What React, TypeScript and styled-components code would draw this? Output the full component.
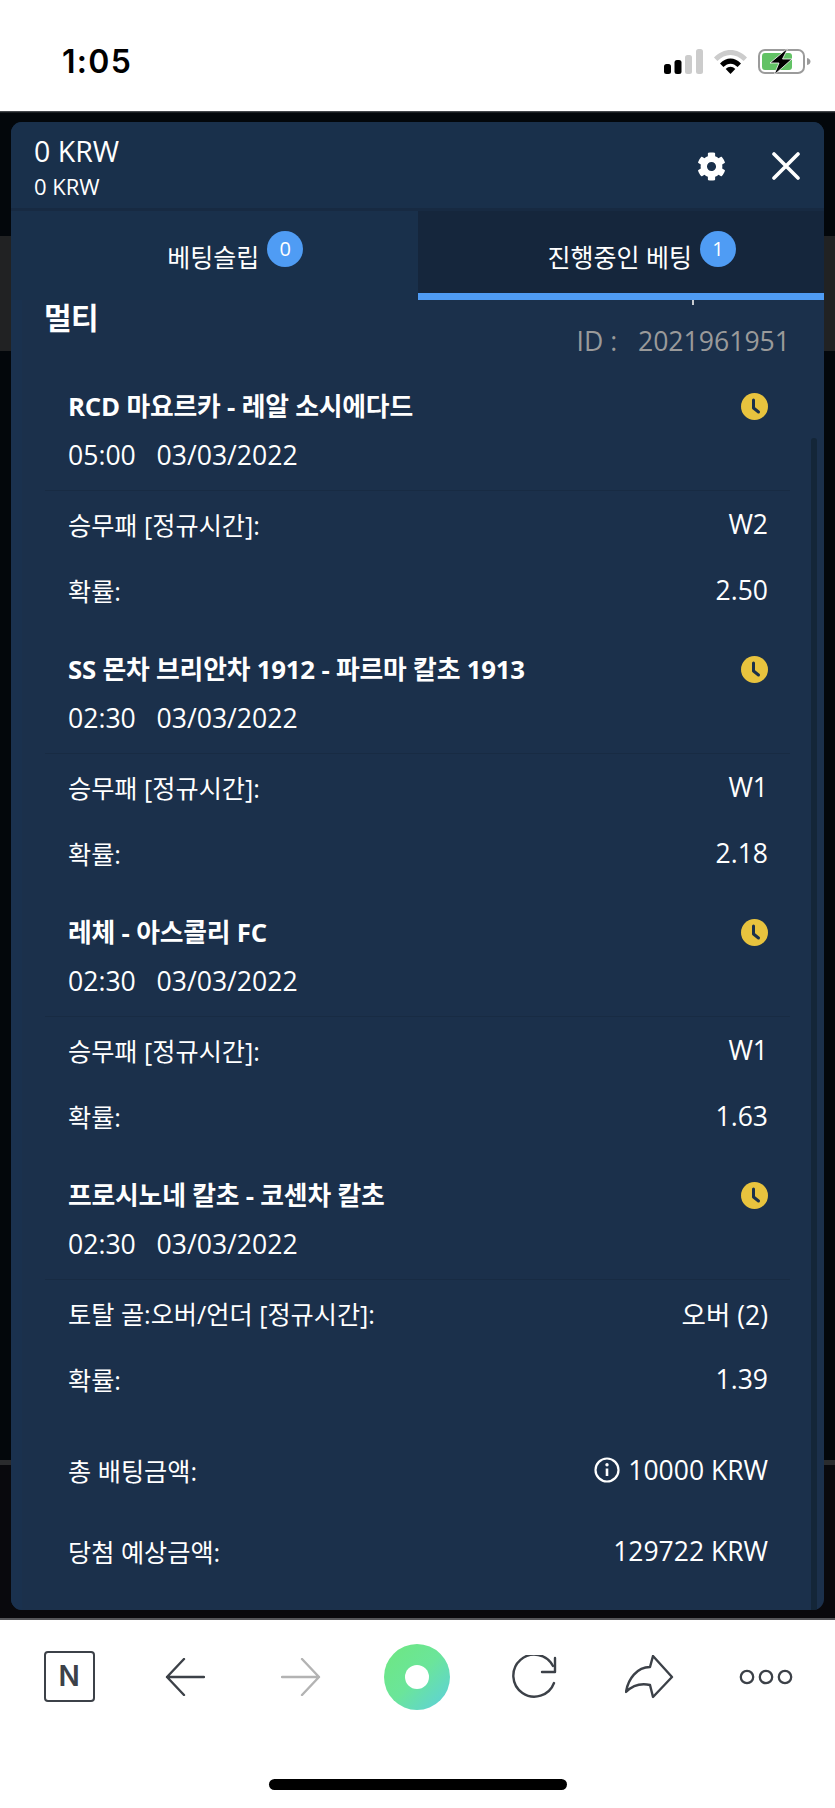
import React from "react";
import styled, { createGlobalStyle } from "styled-components";
import { FaCog } from "react-icons/fa";

const Global = createGlobalStyle`
  html, body { margin: 0; padding: 0; background: #fff; }
  * { box-sizing: border-box; }
  body { font-family: "Open Sans", "Noto Sans CJK KR", sans-serif; }
`;

const Page = styled.div`
  width: 835px;
  height: 1808px;
  display: flex;
  flex-direction: column;
  overflow: hidden;
`;

const StatusBar = styled.div`
  height: 111px;
  flex: none;
  background: #fff;
  display: flex;
  justify-content: space-between;
  padding: 45px 24px 0 62px;
`;

const Clock = styled.div`
  font-family: Inter, sans-serif;
  font-weight: 600;
  font-size: 32px;
  line-height: 34px;
  color: #000;
  letter-spacing: 1.300px;
`;

const StatusIcons = styled.div`
  display: flex;
  align-items: center;
  height: 32px;
  gap: 10px;
`;

const Stage = styled.div`
  height: 1509px;
  flex: none;
  padding: 11px 11px 10px;
  background: linear-gradient(
    to bottom,
    #5a5c60 0,
    #03070b 2px,
    #03070b 125px,
    #212223 125px,
    #212223 240px,
    #03070b 240px,
    #03070b 1349px,
    #2a2b2d 1349px,
    #2a2b2d 1354px,
    #09090d 1354px,
    #09090d 1507px,
    #55565a 1507px
  );
`;

const Panel = styled.div`
  height: 1488px;
  border-radius: 11px;
  overflow: hidden;
  display: flex;
  flex-direction: column;
  background: #1b304b;
  color: #fff;
`;

const Header = styled.div`
  height: 89px;
  flex: none;
  background: #19304b;
  border-bottom: 3px solid #172a42;
  padding: 8px 16px 0 23px;
  display: flex;
  justify-content: space-between;
`;

const Amounts = styled.div`
  display: flex;
  flex-direction: column;
`;

const Balance = styled.div`
  font-size: 28.500px;
  line-height: 42px;
`;

const SubBalance = styled.div`
  font-size: 22px;
  line-height: 28px;
`;

const HeaderActions = styled.div`
  display: flex;
  align-items: flex-start;
  gap: 46px;
  padding: 22px 8px 0 0;
  svg { display: block; }
`;

const Tabs = styled.div`
  display: flex;
  height: 89px;
  flex: none;
`;

const Tab = styled.div<{ $active?: boolean }>`
  flex: 1 1 0;
  display: flex;
  justify-content: center;
  align-items: flex-start;
  gap: 8px;
  padding: 20px 0 0 42px;
  background: ${(p) => (p.$active ? "#15263c" : "#19304b")};
  border-bottom: 7px solid ${(p) => (p.$active ? "#4f9cf4" : "#19304b")};
`;

const TabLabel = styled.span`
  font-size: 25px;
  line-height: 52px;
`;

const Badge = styled.span`
  width: 36px;
  height: 36px;
  border-radius: 50%;
  background: #4f9cf4;
  font-size: 20px;
  line-height: 36px;
  text-align: center;
`;

const Body = styled.div`
  position: relative;
  flex: 1;
  border-left: 11px solid #1a314e;
  padding: 0 34px 0 23px;
  display: flex;
  flex-direction: column;
`;

const Track = styled.div`
  position: absolute;
  right: 7px;
  top: 138px;
  bottom: 0;
  width: 6px;
  border-radius: 3px 3px 0 0;
  background: #142638;
`;

const Tick = styled.div`
  position: absolute;
  left: 670px;
  top: 0;
  width: 2px;
  height: 5px;
  background: #c9ccd0;
`;

const TopRow = styled.div`
  height: 86px;
  flex: none;
  display: flex;
  justify-content: space-between;
  align-items: flex-start;
`;

const Kind = styled.div`
  font-size: 30px;
  font-weight: 700;
  line-height: 36px;
  letter-spacing: -0.5px;
  margin-left: -1px;
`;

const BetId = styled.div`
  margin-top: 21px;
  font-size: 26.600px;
  line-height: 40px;
  color: #9a9a9a;
  white-space: pre;
`;

const Match = styled.div`
  height: 263px;
  flex: none;
  display: flex;
  flex-direction: column;
`;

const MatchTitleRow = styled.div`
  height: 40px;
  margin-bottom: 9px;
  padding: 0 22px 0 23px;
  display: flex;
  justify-content: space-between;
  align-items: center;
`;

const MatchTitle = styled.div`
  font-size: 25.800px;
  font-weight: 700;
  line-height: 40px;
  letter-spacing: -0.2px;
`;

const MatchDate = styled.div`
  height: 56px;
  padding-left: 23px;
  font-size: 26.600px;
  line-height: 40px;
  white-space: pre;
  border-bottom: 1px solid #182b43;
  flex: none;
`;

const Row = styled.div<{ $h?: number }>`
  height: ${(p) => p.$h ?? 66}px;
  padding: 0 22px 0 23px;
  flex: none;
  display: flex;
  justify-content: space-between;
  align-items: center;
  font-size: 26.500px;
`;

const RowLabel = styled.span`
  font-size: 25.200px;
`;

const RowValue = styled.span`
  display: flex;
  align-items: center;
  gap: 8px;
`;

const Totals = styled.div`
  display: flex;
  flex-direction: column;
  margin-top: -9px;
`;

const BottomNav = styled.div`
  height: 188px;
  flex: none;
  background: #fff;
  padding: 23px 11px 0;
  display: flex;
  flex-direction: column;
  align-items: stretch;
`;

const NavIcons = styled.div`
  height: 67px;
  display: grid;
  grid-template-columns: repeat(7, 1fr);
  align-items: center;
  justify-items: center;
`;

const NBox = styled.div`
  width: 51px;
  height: 51px;
  border: 2.500px solid #3c4148;
  border-radius: 4px;
  color: #3c4148;
  font-family: Inter, sans-serif;
  font-weight: 600;
  font-size: 28px;
  line-height: 46px;
  text-align: center;
`;

const HomeDisc = styled.div`
  width: 66px;
  height: 66px;
  border-radius: 50%;
  background: linear-gradient(135deg, #6ee780 0%, #6be59a 50%, #5ccfe0 100%);
  display: flex;
  align-items: center;
  justify-content: center;
`;

const HomeHole = styled.div`
  width: 24px;
  height: 24px;
  border-radius: 50%;
  background: #fff;
`;

const HomeIndicator = styled.div`
  width: 298px;
  height: 11px;
  border-radius: 6px;
  background: #000;
  margin: 69px auto 0;
`;

const Signal = () => (
  <svg width="39" height="25" viewBox="0 0 39 25">
    <rect x="0" y="15" width="7" height="10" rx="2.500" fill="#000" />
    <rect x="10.500" y="11" width="7" height="14" rx="2.500" fill="#000" />
    <rect x="21" y="6" width="7" height="19" rx="2.500" fill="#ccc" />
    <rect x="32" y="0" width="7" height="25" rx="2.500" fill="#ccc" />
  </svg>
);

const Wifi = () => (
  <svg width="35" height="25" viewBox="0 0 35 25">
    <path d="M1 8.500C10.500-1.500 24.500-1.500 34 8.500l-3.400 3.600C22.800 4 12.200 4 4.400 12.100z" fill="#ccc" />
    <path d="M7 14.600C13.500 7.800 21.500 7.800 28 14.600l-3.400 3.500C20 13.500 15 13.500 10.400 18.100z" fill="#000" />
    <path d="M12.700 20c3-3 6.600-3 9.600 0l-4.800 5z" fill="#000" />
  </svg>
);

const Battery = () => (
  <svg width="53" height="27" viewBox="0 0 53 27">
    <rect x="1" y="2" width="45" height="23" rx="6" fill="none" stroke="#9b9b9b" strokeWidth="2" />
    <rect x="4" y="5" width="30" height="17" rx="3" fill="#62c265" />
    <path d="M49 10c2.500.5 3.500 2 3.500 3.500S51.500 16.500 49 17z" fill="#9b9b9b" />
    <path d="M30 0 12 15h9l-5 12 18-16h-9.500z" fill="#000" stroke="#fff" strokeWidth="0.800" />
  </svg>
);

const CloseIcon = () => (
  <svg width="28" height="28" viewBox="0 0 28 28">
    <path d="M2 2l24 24M26 2 2 26" stroke="#fff" strokeWidth="3.600" strokeLinecap="round" />
  </svg>
);

const ClockIcon = () => (
  <svg width="27" height="27" viewBox="0 0 27 27">
    <circle cx="13.500" cy="13.500" r="13.500" fill="#e8c33e" />
    <path d="M12.500 7v8l5 4" fill="none" stroke="#1b304b" strokeWidth="3" strokeLinecap="round" strokeLinejoin="round" />
  </svg>
);

const InfoIcon = () => (
  <svg width="26" height="26" viewBox="0 0 26 26">
    <circle cx="13" cy="13" r="11.500" fill="none" stroke="#fff" strokeWidth="2.200" />
    <circle cx="13" cy="7.800" r="1.700" fill="#fff" />
    <path d="M13 11.500v7.500" stroke="#fff" strokeWidth="2.600" />
  </svg>
);

const ArrowLeft = () => (
  <svg width="40" height="38" viewBox="0 0 40 38">
    <path d="M19 1 2 19l17 18M2 19h37" fill="none" stroke="#3c4148" strokeWidth="2.400" strokeLinecap="round" strokeLinejoin="round" />
  </svg>
);

const ArrowRight = () => (
  <svg width="40" height="38" viewBox="0 0 40 38">
    <path d="M21 1l17 18-17 18M38 19H1" fill="none" stroke="#b3b3b3" strokeWidth="2.400" strokeLinecap="round" strokeLinejoin="round" />
  </svg>
);

const Reload = () => (
  <svg width="46" height="44" viewBox="0 0 46 44">
    <path d="M42 11A21 21 0 1 0 43 28" fill="none" stroke="#3c4148" strokeWidth="2.400" strokeLinecap="round" />
    <path d="M44 3v14H31" fill="none" stroke="#3c4148" strokeWidth="2.400" strokeLinecap="round" strokeLinejoin="round" />
  </svg>
);

const Share = () => (
  <svg width="49" height="44" viewBox="0 0 49 44">
    <path
      d="M28 1 47 22 28 42 25 30C16 28 7 31 1 37 3 24 12 12 25 12z"
      fill="none"
      stroke="#3c4148"
      strokeWidth="2.400"
      strokeLinejoin="round"
    />
  </svg>
);

const Dots = () => (
  <svg width="54" height="16" viewBox="0 0 54 16">
    <circle cx="8" cy="8" r="6.200" fill="none" stroke="#3c4148" strokeWidth="2.300" />
    <circle cx="27" cy="8" r="6.200" fill="none" stroke="#3c4148" strokeWidth="2.300" />
    <circle cx="46" cy="8" r="6.200" fill="none" stroke="#3c4148" strokeWidth="2.300" />
  </svg>
);

const matches = [
  { title: "RCD 마요르카 - 레알 소시에다드", time: "05:00", market: "승무패 [정규시간]:", pick: "W2", odds: "2.50" },
  { title: "SS 몬차 브리안차 1912 - 파르마 칼초 1913", time: "02:30", market: "승무패 [정규시간]:", pick: "W1", odds: "2.18" },
  { title: "레체 - 아스콜리 FC", time: "02:30", market: "승무패 [정규시간]:", pick: "W1", odds: "1.63" },
  { title: "프로시노네 칼초 - 코센차 칼초", time: "02:30", market: "토탈 골:오버/언더 [정규시간]:", pick: "오버 (2)", odds: "1.39" },
];

export default function App() {
  return (
    <Page>
      <Global />
      <StatusBar>
        <Clock>1:05</Clock>
        <StatusIcons>
          <Signal />
          <Wifi />
          <Battery />
        </StatusIcons>
      </StatusBar>
      <Stage>
        <Panel>
          <Header>
            <Amounts>
              <Balance>0 KRW</Balance>
              <SubBalance>0 KRW</SubBalance>
            </Amounts>
            <HeaderActions>
              <FaCog size={29} color="#fff" />
              <CloseIcon />
            </HeaderActions>
          </Header>
          <Tabs>
            <Tab>
              <TabLabel>베팅슬립</TabLabel>
              <Badge>0</Badge>
            </Tab>
            <Tab $active>
              <TabLabel>진행중인 베팅</TabLabel>
              <Badge>1</Badge>
            </Tab>
          </Tabs>
          <Body>
            <Tick />
            <Track />
            <TopRow>
              <Kind>멀티</Kind>
              <BetId>{"ID :   2021961951"}</BetId>
            </TopRow>
            {matches.map((m) => (
              <Match key={m.title}>
                <MatchTitleRow>
                  <MatchTitle>{m.title}</MatchTitle>
                  <ClockIcon />
                </MatchTitleRow>
                <MatchDate>{`${m.time}   03/03/2022`}</MatchDate>
                <Row>
                  <RowLabel>{m.market}</RowLabel>
                  <RowValue>{m.pick}</RowValue>
                </Row>
                <Row>
                  <RowLabel>확률:</RowLabel>
                  <RowValue>{m.odds}</RowValue>
                </Row>
              </Match>
            ))}
            <Totals>
              <Row $h={81}>
                <RowLabel>총 배팅금액:</RowLabel>
                <RowValue>
                  <InfoIcon />
                  10000 KRW
                </RowValue>
              </Row>
              <Row $h={81}>
                <RowLabel>당첨 예상금액:</RowLabel>
                <RowValue>129722 KRW</RowValue>
              </Row>
            </Totals>
          </Body>
        </Panel>
      </Stage>
      <BottomNav>
        <NavIcons>
          <NBox>N</NBox>
          <ArrowLeft />
          <ArrowRight />
          <HomeDisc>
            <HomeHole />
          </HomeDisc>
          <Reload />
          <Share />
          <Dots />
        </NavIcons>
        <HomeIndicator />
      </BottomNav>
    </Page>
  );
}
